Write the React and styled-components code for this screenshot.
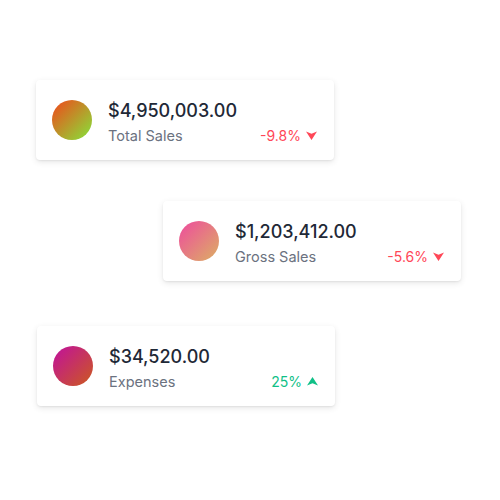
import React from "react";
import styled, { createGlobalStyle } from "styled-components";

const GlobalStyle = createGlobalStyle`
  body {
    margin: 0;
    background: #ffffff;
    font-family: "Inter", "Noto Sans", sans-serif;
  }
`;

const Page = styled.div`
  width: 500px;
  height: 500px;
  box-sizing: border-box;
  padding: 80px 39px 0 36px;
  display: flex;
  flex-direction: column;
  gap: 41px;
`;

const Card = styled.div`
  width: 298px;
  height: 80px;
  box-sizing: border-box;
  padding: 0 17px 0 16px;
  display: flex;
  align-items: center;
  gap: 16px;
  background: #fff;
  border-radius: 4px;
  box-shadow: 0 1px 2px rgba(0, 0, 0, 0.06), 0 2px 6px rgba(0, 0, 0, 0.1);
  align-self: ${(props) => (props.$right ? "flex-end" : "flex-start")};
  margin-top: ${(props) => props.$shift || 0}px;
  margin-left: ${(props) => props.$nudge || 0}px;
`;

const Avatar = styled.div`
  width: 40px;
  height: 40px;
  flex: none;
  border-radius: 50%;
  background: linear-gradient(135deg, ${(p) => p.$from}, ${(p) => p.$to});
`;

const Body = styled.div`
  flex: 1;
  display: flex;
  flex-direction: column;
  gap: 4px;
  padding-top: 5px;
`;

const Amount = styled.div`
  font-size: 18px;
  font-weight: 500;
  color: #1f2937;
  line-height: 22px;
`;

const Row = styled.div`
  display: flex;
  justify-content: space-between;
  align-items: center;
`;

const Label = styled.div`
  font-size: 14.5px;
  color: #6b7280;
  line-height: 20px;
`;

const Change = styled.div`
  display: flex;
  align-items: center;
  gap: 5px;
  font-size: 14px;
  line-height: 20px;
  color: ${(p) => (p.$up ? "#10c087" : "#ff4757")};
`;

function Arrow({ up }) {
  return (
    <svg
      width="11"
      height="9"
      viewBox="0 0 11 9"
      style={{ transform: up ? "rotate(180deg)" : "none" }}
    >
      <path d="M0 0.5 L5.5 2.8 L11 0.5 L5.5 9 Z" fill="currentColor" />
    </svg>
  );
}

const items = [
  { amount: "$4,950,003.00", label: "Total Sales", change: "-9.8%", up: false, from: "#f2461a", to: "#84e53a" },
  { amount: "$1,203,412.00", label: "Gross Sales", change: "-5.6%", up: false, from: "#ee4a9e", to: "#dcb063", right: true },
  { amount: "$34,520.00", label: "Expenses", change: "25%", up: true, from: "#c0109e", to: "#cc5a1e", shift: 4, nudge: 1 },
];

export default function App() {
  return (
    <>
      <GlobalStyle />
      <Page>
        {items.map((it) => (
          <Card key={it.label} $right={it.right} $shift={it.shift} $nudge={it.nudge}>
            <Avatar $from={it.from} $to={it.to} />
            <Body>
              <Amount>{it.amount}</Amount>
              <Row>
                <Label>{it.label}</Label>
                <Change $up={it.up}>
                  {it.change}
                  <Arrow up={it.up} />
                </Change>
              </Row>
            </Body>
          </Card>
        ))}
      </Page>
    </>
  );
}
